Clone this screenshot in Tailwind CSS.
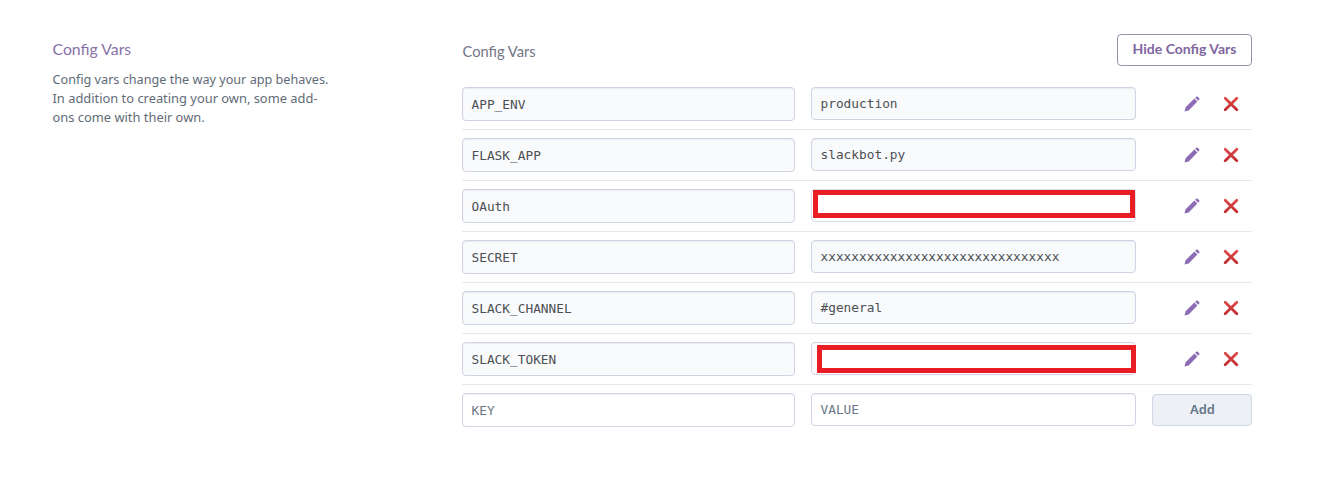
<!DOCTYPE html>
<html lang="en">
<head>
<meta charset="utf-8">
<title>Config Vars</title>
<script src="https://cdn.jsdelivr.net/npm/@tailwindcss/browser@4"></script>
</head>
<body class="bg-white w-[1325px] h-[477px] overflow-hidden font-['Noto_Sans',sans-serif] text-[#566170]">
<svg class="absolute size-0">
  <defs>
    <linearGradient id="pg" x1="0" y1="0" x2="1" y2="1"><stop offset="0" stop-color="#8560b0"/><stop offset="1" stop-color="#9478b8"/></linearGradient>
    <linearGradient id="rg" x1="0" y1="0" x2="0" y2="1"><stop offset="0" stop-color="#dc4a4a"/><stop offset="1" stop-color="#c02c30"/></linearGradient>
  </defs>
  <symbol id="pencil" viewBox="0 0 16 16"><path fill="url(#pg)" d="M.5 15.5 1.6 11.3 10.4 2.6 13.4 5.6 4.7 14.4ZM11.2 1.8 12.2.8Q13 .1 13.8.8L15.2 2.2Q15.9 3 15.2 3.8L14.2 4.8Z"/></symbol>
  <symbol id="cross" viewBox="0 0 16 16"><path fill="none" stroke="url(#rg)" stroke-width="2.8" stroke-linecap="round" d="M2.2 2.2 13.8 13.8M13.8 2.2 2.2 13.8"/></symbol>
</svg>
<main class="flex pl-[52px] pt-[34px]">
  <aside class="w-[410px] shrink-0 pt-[3px] pl-[0.5px]">
    <h2 class="font-['Lato'] text-[15.8px] leading-[24px] text-[#8871a6] whitespace-nowrap">Config Vars</h2>
    <p class="mt-[9px] text-[12.88px] leading-[19px] whitespace-nowrap text-[#5f6b76]"><span class="block h-[19px] text-[12.65px]">Config vars change the way your app behaves.</span>In addition to creating your own, some add-<br>ons come with their own.</p>
  </aside>
  <section class="w-[790px] shrink-0">
    <header class="flex justify-between h-[45px]">
      <h3 class="font-['Lato'] text-[14.7px] leading-[20px] pt-[7px] pl-[0.5px] text-[#737588]">Config Vars</h3>
      <button class="w-[135px] h-8 rounded-[4px] border border-[#9c8fae] font-['Lato'] font-bold text-[14px] leading-[28px] pb-0.5 text-[#7f66a0] whitespace-nowrap">Hide Config Vars</button>
    </header>
    <div class="font-['DejaVu_Sans_Mono',monospace] text-[12.8px] text-[#4c5054]">
      <div class="flex h-[51px] pt-2 border-b border-[#e6e8ee]">
        <div class="w-[333px] h-[34px] rounded-[4px] border border-[#cfd4e2] bg-[#f9fafc] px-[8.5px] leading-[33px] shadow-[inset_0_1px_1px_#e9ecf2]">APP_ENV</div>
        <div class="ml-4 w-[325px] h-[33px] rounded-[4px] border border-[#cfd4e2] bg-[#f9fafc] px-[8.5px] leading-[31px] shadow-[inset_0_1px_1px_#e9ecf2]">production</div>
        <svg class="ml-12 mt-[9px] size-4"><use href="#pencil"/></svg><svg class="ml-[23px] mt-[9px] size-4"><use href="#cross"/></svg>
      </div>
      <div class="flex h-[51px] pt-2 border-b border-[#e6e8ee]">
        <div class="w-[333px] h-[34px] rounded-[4px] border border-[#cfd4e2] bg-[#f9fafc] px-[8.5px] leading-[33px] shadow-[inset_0_1px_1px_#e9ecf2]">FLASK_APP</div>
        <div class="ml-4 w-[325px] h-[33px] rounded-[4px] border border-[#cfd4e2] bg-[#f9fafc] px-[8.5px] leading-[31px] shadow-[inset_0_1px_1px_#e9ecf2]">slackbot.py</div>
        <svg class="ml-12 mt-[9px] size-4"><use href="#pencil"/></svg><svg class="ml-[23px] mt-[9px] size-4"><use href="#cross"/></svg>
      </div>
      <div class="flex h-[51px] pt-2 border-b border-[#e6e8ee]">
        <div class="w-[333px] h-[34px] rounded-[4px] border border-[#cfd4e2] bg-[#f9fafc] px-[8.5px] leading-[33px] shadow-[inset_0_1px_1px_#e9ecf2]">OAuth</div>
        <div class="relative ml-4 w-[325px] h-[33px] rounded-[4px] border border-[#d9dde7] bg-white"><div class="absolute left-px top-0 w-[322px] h-7 border-[5px] border-[#ea1c24] bg-white"></div></div>
        <svg class="ml-12 mt-[9px] size-4"><use href="#pencil"/></svg><svg class="ml-[23px] mt-[9px] size-4"><use href="#cross"/></svg>
      </div>
      <div class="flex h-[51px] pt-2 border-b border-[#e6e8ee]">
        <div class="w-[333px] h-[34px] rounded-[4px] border border-[#cfd4e2] bg-[#f9fafc] px-[8.5px] leading-[33px] shadow-[inset_0_1px_1px_#e9ecf2]">SECRET</div>
        <div class="ml-4 w-[325px] h-[33px] rounded-[4px] border border-[#cfd4e2] bg-[#f9fafc] px-[8.5px] leading-[31px] shadow-[inset_0_1px_1px_#e9ecf2]">xxxxxxxxxxxxxxxxxxxxxxxxxxxxxxx</div>
        <svg class="ml-12 mt-[9px] size-4"><use href="#pencil"/></svg><svg class="ml-[23px] mt-[9px] size-4"><use href="#cross"/></svg>
      </div>
      <div class="flex h-[51px] pt-2 border-b border-[#e6e8ee]">
        <div class="w-[333px] h-[34px] rounded-[4px] border border-[#cfd4e2] bg-[#f9fafc] px-[8.5px] leading-[33px] shadow-[inset_0_1px_1px_#e9ecf2]">SLACK_CHANNEL</div>
        <div class="ml-4 w-[325px] h-[33px] rounded-[4px] border border-[#cfd4e2] bg-[#f9fafc] px-[8.5px] leading-[31px] shadow-[inset_0_1px_1px_#e9ecf2]">#general</div>
        <svg class="ml-12 mt-[9px] size-4"><use href="#pencil"/></svg><svg class="ml-[23px] mt-[9px] size-4"><use href="#cross"/></svg>
      </div>
      <div class="flex h-[51px] pt-2 border-b border-[#e6e8ee]">
        <div class="w-[333px] h-[34px] rounded-[4px] border border-[#cfd4e2] bg-[#f9fafc] px-[8.5px] leading-[33px] shadow-[inset_0_1px_1px_#e9ecf2]">SLACK_TOKEN</div>
        <div class="relative ml-4 w-[325px] h-[33px] rounded-[4px] border border-[#cfd4e2] bg-[#fbfbfd]"><div class="absolute left-[5px] top-[2px] w-[319px] h-7 border-[5px] border-[#ea1c24] bg-white"></div></div>
        <svg class="ml-12 mt-[9px] size-4"><use href="#pencil"/></svg><svg class="ml-[23px] mt-[9px] size-4"><use href="#cross"/></svg>
      </div>
      <div class="flex h-[51px] pt-2 text-[#6b7785]">
        <div class="w-[333px] h-[34px] rounded-[4px] border border-[#cfd4e2] px-[8.5px] leading-[33px] shadow-[inset_0_1px_1px_#eef0f4]">KEY</div>
        <div class="ml-4 w-[325px] h-[33px] rounded-[4px] border border-[#cfd4e2] px-[8.5px] leading-[31px] shadow-[inset_0_1px_1px_#eef0f4]">VALUE</div>
        <button class="ml-4 mt-px w-[100px] h-8 rounded-[4px] border border-[#cfd7e4] bg-[#edf1f6] font-['Noto_Sans',sans-serif] font-semibold text-[13px] leading-[28px] pb-0.5 pl-px text-[#66748a]">Add</button>
      </div>
    </div>
  </section>
</main>
</body>
</html>
